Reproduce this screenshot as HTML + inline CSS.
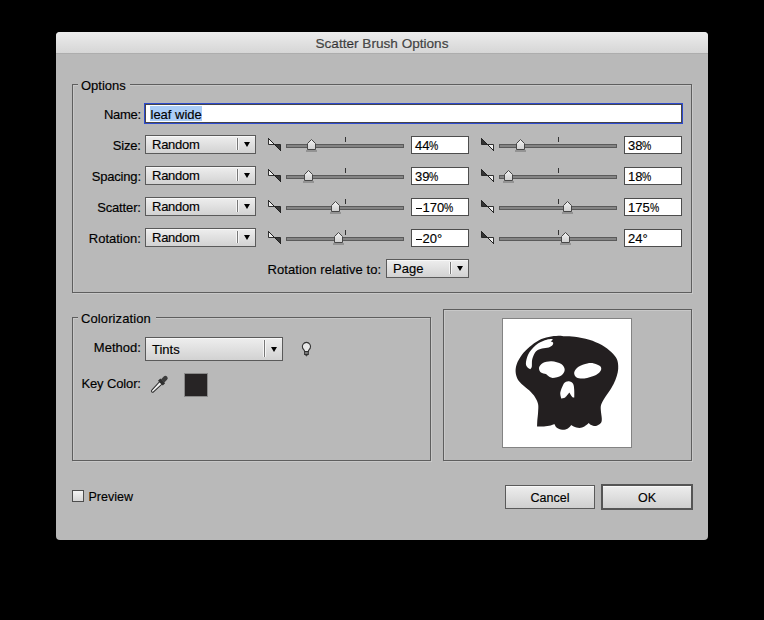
<!DOCTYPE html><html><head><meta charset="utf-8"><style>
*{margin:0;padding:0;box-sizing:border-box}
html,body{width:764px;height:620px;background:#000;overflow:hidden;font-family:"Liberation Sans", sans-serif;}
.a{position:absolute}
.t{position:absolute;font-size:13px;color:#000;-webkit-text-stroke:0.15px #000;white-space:nowrap;line-height:16px}
#win{position:absolute;left:56px;top:32px;width:652px;height:508px;background:#b9b9b9;border-radius:4px 4px 4px 4px;overflow:hidden}
#title{position:absolute;left:0;top:0;width:652px;height:22px;background:linear-gradient(#ececec,#d6d6d6);border-bottom:1px solid #adadad}
.grp{position:absolute;border:1px solid #5e5e5e;box-shadow:inset 1px 1px #c8c8c8,1px 1px #c8c8c8}
.lg{position:absolute;background:#b9b9b9;height:16px}
.pop{position:absolute;border:1px solid #5a5a5a;background:linear-gradient(#eeeeee,#d2d2d2);box-shadow:inset 0 1px #f8f8f8}
.pop .sep{position:absolute;top:2px;bottom:3px;width:1px;background:#777;box-shadow:1px 0 #f6f6f6,-1px 0 #f6f6f6}
.pop .arr{position:absolute;width:0;height:0;border-left:3.5px solid transparent;border-right:3.5px solid transparent;border-top:5px solid #000}
.fld{position:absolute;border:1px solid #4d4d4d;background:#fff}
.trk{position:absolute;height:4px;background:#848484;border:1px solid #5a5a5a}
.tick{position:absolute;width:1px;height:5px;background:#333}
.btn{position:absolute;border:1px solid #5a5a5a;background:linear-gradient(#eeeeee,#cfcfcf);box-shadow:inset 0 1px #f8f8f8}
</style></head><body><svg width="0" height="0" style="position:absolute"><defs><linearGradient id="thg" x1="0" y1="0" x2="0" y2="1"><stop offset="0" stop-color="#f2f2f2"/><stop offset="1" stop-color="#d0d0d0"/></linearGradient></defs></svg><div id="win"><div id="title"><div class="t" style="left:0;width:652px;text-align:center;top:4px;color:#4d4d4d;font-size:13.6px">Scatter Brush Options</div></div><div class="grp" style="left:16px;top:52px;width:620px;height:209px;"></div><div class="lg" style="left:22px;top:44px;width:52px"></div><div class="t" style="left:25px;top:46px;">Options</div><div class="t" style="right:567.2px;top:75px;letter-spacing:-0.3px">Name:</div><div class="fld" style="left:88px;top:71px;width:539px;height:21px;border:1px solid #2d4bcf;box-shadow:inset 0 0 0 1px #45454a;"></div><div class="a" style="left:94px;top:74px;width:52px;height:15px;background:#abcdf7"></div><div class="t" style="left:94.5px;top:75px;">leaf wide</div><div class="t" style="right:567.2px;top:105.5px;letter-spacing:-0.16px">Size:</div><div class="pop" style="left:89px;top:103px;width:111px;height:19px;"><div class="sep" style="left:91px"></div><div class="arr" style="left:97.5px;top:6px"></div><div class="t" style="left:6px;top:1px;letter-spacing:-0.25px">Random</div></div><svg class="a" style="left:212px;top:106px" width="14" height="14" viewBox="0 0 14 14"><path d="M0.5 0.5 L0.5 6.5 L6.5 6.5 Z" fill="#f0f0f0" stroke="#1e1e1e" stroke-width="0.9"/><path d="M6.5 6.5 L12.5 6.5 L12.5 12.5 Z" fill="#3a3a3a" stroke="#1e1e1e" stroke-width="0.9"/><path d="M0.3 0.3 L13 13" stroke="#1e1e1e" stroke-width="1"/></svg><div class="trk" style="left:230px;top:112px;width:118px;height:4px;"></div><div class="tick" style="left:289px;top:105px"></div><svg class="a" style="left:249.0px;top:106px" width="13" height="14" viewBox="0 0 13 14"><rect x="1" y="12" width="11" height="2" fill="#939393"/><path d="M2.5 11.5 L2.5 5.5 L6.5 1.5 L10.5 5.5 L10.5 11.5 Z" fill="url(#thg)" stroke="#474747" stroke-width="1"/></svg><div class="fld" style="left:355px;top:104px;width:58px;height:18px;"><div class="t" style="left:3px;top:1px">44<span style="display:inline-block;transform:scaleX(0.8);transform-origin:0 0">%</span></div></div><svg class="a" style="left:425px;top:106px" width="14" height="14" viewBox="0 0 14 14"><path d="M0.5 0.5 L0.5 6.5 L6.5 6.5 Z" fill="#333" stroke="#1e1e1e" stroke-width="0.9"/><path d="M6.5 6.5 L12.5 6.5 L12.5 12.5 Z" fill="#f0f0f0" stroke="#1e1e1e" stroke-width="0.9"/><path d="M0.3 0.3 L13 13" stroke="#1e1e1e" stroke-width="1"/></svg><div class="trk" style="left:443px;top:112px;width:118px;height:4px;"></div><div class="tick" style="left:502px;top:105px"></div><svg class="a" style="left:458.0px;top:106px" width="13" height="14" viewBox="0 0 13 14"><rect x="1" y="12" width="11" height="2" fill="#939393"/><path d="M2.5 11.5 L2.5 5.5 L6.5 1.5 L10.5 5.5 L10.5 11.5 Z" fill="url(#thg)" stroke="#474747" stroke-width="1"/></svg><div class="fld" style="left:568px;top:104px;width:58px;height:18px;"><div class="t" style="left:3px;top:1px">38<span style="display:inline-block;transform:scaleX(0.8);transform-origin:0 0">%</span></div></div><div class="t" style="right:567.2px;top:136.5px;letter-spacing:-0.19px">Spacing:</div><div class="pop" style="left:89px;top:134px;width:111px;height:19px;"><div class="sep" style="left:91px"></div><div class="arr" style="left:97.5px;top:6px"></div><div class="t" style="left:6px;top:1px;letter-spacing:-0.25px">Random</div></div><svg class="a" style="left:212px;top:137px" width="14" height="14" viewBox="0 0 14 14"><path d="M0.5 0.5 L0.5 6.5 L6.5 6.5 Z" fill="#f0f0f0" stroke="#1e1e1e" stroke-width="0.9"/><path d="M6.5 6.5 L12.5 6.5 L12.5 12.5 Z" fill="#3a3a3a" stroke="#1e1e1e" stroke-width="0.9"/><path d="M0.3 0.3 L13 13" stroke="#1e1e1e" stroke-width="1"/></svg><div class="trk" style="left:230px;top:143px;width:118px;height:4px;"></div><div class="tick" style="left:289px;top:136px"></div><svg class="a" style="left:246.0px;top:137px" width="13" height="14" viewBox="0 0 13 14"><rect x="1" y="12" width="11" height="2" fill="#939393"/><path d="M2.5 11.5 L2.5 5.5 L6.5 1.5 L10.5 5.5 L10.5 11.5 Z" fill="url(#thg)" stroke="#474747" stroke-width="1"/></svg><div class="fld" style="left:355px;top:135px;width:58px;height:18px;"><div class="t" style="left:3px;top:1px">39<span style="display:inline-block;transform:scaleX(0.8);transform-origin:0 0">%</span></div></div><svg class="a" style="left:425px;top:137px" width="14" height="14" viewBox="0 0 14 14"><path d="M0.5 0.5 L0.5 6.5 L6.5 6.5 Z" fill="#333" stroke="#1e1e1e" stroke-width="0.9"/><path d="M6.5 6.5 L12.5 6.5 L12.5 12.5 Z" fill="#f0f0f0" stroke="#1e1e1e" stroke-width="0.9"/><path d="M0.3 0.3 L13 13" stroke="#1e1e1e" stroke-width="1"/></svg><div class="trk" style="left:443px;top:143px;width:118px;height:4px;"></div><div class="tick" style="left:502px;top:136px"></div><svg class="a" style="left:446.0px;top:137px" width="13" height="14" viewBox="0 0 13 14"><rect x="1" y="12" width="11" height="2" fill="#939393"/><path d="M2.5 11.5 L2.5 5.5 L6.5 1.5 L10.5 5.5 L10.5 11.5 Z" fill="url(#thg)" stroke="#474747" stroke-width="1"/></svg><div class="fld" style="left:568px;top:135px;width:58px;height:18px;"><div class="t" style="left:3px;top:1px">18<span style="display:inline-block;transform:scaleX(0.8);transform-origin:0 0">%</span></div></div><div class="t" style="right:567.2px;top:167.5px;letter-spacing:-0.14px">Scatter:</div><div class="pop" style="left:89px;top:165px;width:111px;height:19px;"><div class="sep" style="left:91px"></div><div class="arr" style="left:97.5px;top:6px"></div><div class="t" style="left:6px;top:1px;letter-spacing:-0.25px">Random</div></div><svg class="a" style="left:212px;top:168px" width="14" height="14" viewBox="0 0 14 14"><path d="M0.5 0.5 L0.5 6.5 L6.5 6.5 Z" fill="#f0f0f0" stroke="#1e1e1e" stroke-width="0.9"/><path d="M6.5 6.5 L12.5 6.5 L12.5 12.5 Z" fill="#3a3a3a" stroke="#1e1e1e" stroke-width="0.9"/><path d="M0.3 0.3 L13 13" stroke="#1e1e1e" stroke-width="1"/></svg><div class="trk" style="left:230px;top:174px;width:118px;height:4px;"></div><div class="tick" style="left:289px;top:167px"></div><svg class="a" style="left:273.0px;top:168px" width="13" height="14" viewBox="0 0 13 14"><rect x="1" y="12" width="11" height="2" fill="#939393"/><path d="M2.5 11.5 L2.5 5.5 L6.5 1.5 L10.5 5.5 L10.5 11.5 Z" fill="url(#thg)" stroke="#474747" stroke-width="1"/></svg><div class="fld" style="left:355px;top:166px;width:58px;height:18px;"><div class="t" style="left:3px;top:1px"><span style="display:inline-block;width:5.4px;height:1.2px;background:#000;vertical-align:baseline;position:relative;top:-3.2px;margin:0 1px 0 1.2px"></span>170<span style="display:inline-block;transform:scaleX(0.8);transform-origin:0 0">%</span></div></div><svg class="a" style="left:425px;top:168px" width="14" height="14" viewBox="0 0 14 14"><path d="M0.5 0.5 L0.5 6.5 L6.5 6.5 Z" fill="#333" stroke="#1e1e1e" stroke-width="0.9"/><path d="M6.5 6.5 L12.5 6.5 L12.5 12.5 Z" fill="#f0f0f0" stroke="#1e1e1e" stroke-width="0.9"/><path d="M0.3 0.3 L13 13" stroke="#1e1e1e" stroke-width="1"/></svg><div class="trk" style="left:443px;top:174px;width:118px;height:4px;"></div><div class="tick" style="left:502px;top:167px"></div><svg class="a" style="left:504.5px;top:168px" width="13" height="14" viewBox="0 0 13 14"><rect x="1" y="12" width="11" height="2" fill="#939393"/><path d="M2.5 11.5 L2.5 5.5 L6.5 1.5 L10.5 5.5 L10.5 11.5 Z" fill="url(#thg)" stroke="#474747" stroke-width="1"/></svg><div class="fld" style="left:568px;top:166px;width:58px;height:18px;"><div class="t" style="left:3px;top:1px">175<span style="display:inline-block;transform:scaleX(0.8);transform-origin:0 0">%</span></div></div><div class="t" style="right:567.2px;top:198.5px;">Rotation:</div><div class="pop" style="left:89px;top:196px;width:111px;height:19px;"><div class="sep" style="left:91px"></div><div class="arr" style="left:97.5px;top:6px"></div><div class="t" style="left:6px;top:1px;letter-spacing:-0.25px">Random</div></div><svg class="a" style="left:212px;top:199px" width="14" height="14" viewBox="0 0 14 14"><path d="M0.5 0.5 L0.5 6.5 L6.5 6.5 Z" fill="#f0f0f0" stroke="#1e1e1e" stroke-width="0.9"/><path d="M6.5 6.5 L12.5 6.5 L12.5 12.5 Z" fill="#3a3a3a" stroke="#1e1e1e" stroke-width="0.9"/><path d="M0.3 0.3 L13 13" stroke="#1e1e1e" stroke-width="1"/></svg><div class="trk" style="left:230px;top:205px;width:118px;height:4px;"></div><div class="tick" style="left:289px;top:198px"></div><svg class="a" style="left:276.0px;top:199px" width="13" height="14" viewBox="0 0 13 14"><rect x="1" y="12" width="11" height="2" fill="#939393"/><path d="M2.5 11.5 L2.5 5.5 L6.5 1.5 L10.5 5.5 L10.5 11.5 Z" fill="url(#thg)" stroke="#474747" stroke-width="1"/></svg><div class="fld" style="left:355px;top:197px;width:58px;height:18px;"><div class="t" style="left:3px;top:1px"><span style="display:inline-block;width:5.4px;height:1.2px;background:#000;vertical-align:baseline;position:relative;top:-3.2px;margin:0 1px 0 1.2px"></span>20&#176;</div></div><svg class="a" style="left:425px;top:199px" width="14" height="14" viewBox="0 0 14 14"><path d="M0.5 0.5 L0.5 6.5 L6.5 6.5 Z" fill="#333" stroke="#1e1e1e" stroke-width="0.9"/><path d="M6.5 6.5 L12.5 6.5 L12.5 12.5 Z" fill="#f0f0f0" stroke="#1e1e1e" stroke-width="0.9"/><path d="M0.3 0.3 L13 13" stroke="#1e1e1e" stroke-width="1"/></svg><div class="trk" style="left:443px;top:205px;width:118px;height:4px;"></div><div class="tick" style="left:502px;top:198px"></div><svg class="a" style="left:502.5px;top:199px" width="13" height="14" viewBox="0 0 13 14"><rect x="1" y="12" width="11" height="2" fill="#939393"/><path d="M2.5 11.5 L2.5 5.5 L6.5 1.5 L10.5 5.5 L10.5 11.5 Z" fill="url(#thg)" stroke="#474747" stroke-width="1"/></svg><div class="fld" style="left:568px;top:197px;width:58px;height:18px;"><div class="t" style="left:3px;top:1px">24&#176;</div></div><div class="t" style="left:211.5px;top:230px;letter-spacing:0.08px">Rotation relative to:</div><div class="pop" style="left:330px;top:227px;width:83px;height:19px;"><div class="sep" style="left:63px"></div><div class="arr" style="left:69.5px;top:6px"></div><div class="t" style="left:6px;top:1px;">Page</div></div><div class="grp" style="left:16px;top:285px;width:359px;height:144px;"></div><div class="lg" style="left:22px;top:277px;width:78px"></div><div class="t" style="left:25px;top:278.5px;letter-spacing:0.1px">Colorization</div><div class="t" style="right:567.2px;top:307.5px;">Method:</div><div class="pop" style="left:89px;top:305px;width:138px;height:24px;"><div class="sep" style="left:118px"></div><div class="arr" style="left:124.5px;top:9px"></div><div class="t" style="left:6px;top:4px;">Tints</div></div><svg class="a" style="left:244px;top:308px" width="14" height="18" viewBox="0 0 14 18"><path d="M4.6 11.5 C4.6 10 3 9.2 2.63 8 A4.1 4.1 0 1 1 10.27 8 C9.9 9.2 8.3 10 8.3 11.5 Z" fill="#e8e8e8" stroke="#333" stroke-width="1.1"/><rect x="4.6" y="11.5" width="3.7" height="3" fill="#7a7a7a" stroke="#333" stroke-width="1"/><path d="M5.4 15 L6.45 16 L7.5 15 Z" fill="#333" stroke="#333" stroke-width="0.6"/></svg><div class="t" style="right:567.2px;top:343.5px;letter-spacing:-0.13px">Key Color:</div><svg class="a" style="left:-56px;top:-32px" width="764" height="620" viewBox="0 0 764 620"><g transform="translate(152.3 391.3) rotate(-45)"><path d="M0.5 -1.2 L12 -1.7 L12 1.7 L0.5 1.2 A1.2 1.2 0 0 1 0.5 -1.2 Z" fill="#f2f2f2" stroke="#2a2a2a" stroke-width="1"/><rect x="11.5" y="-3.4" width="3.2" height="6.8" fill="#2e2e2e"/><path d="M14.5 -2.3 L18.5 -2.3 A2.3 2.3 0 0 1 18.5 2.3 L14.5 2.3 Z" fill="#3c3c3c"/></g></svg><div class="a" style="left:128px;top:341px;width:24px;height:24px;background:#272425;border:1px solid #8a8a8a"></div><div class="grp" style="left:387px;top:277px;width:249px;height:152px;"></div><div class="a" style="left:446px;top:286px;width:130px;height:130px;background:#fff;border:1px solid #838383"></div><svg class="a" style="left:-56px;top:-32px" width="764" height="620" viewBox="0 0 764 620"><path d="M558.40 335.80 C561.12 335.68 562.28 336.13 565.00 336.30 C567.72 336.47 570.67 336.23 574.70 336.80 C578.73 337.37 584.68 338.33 589.20 339.70 C593.72 341.07 598.08 342.90 601.80 345.00 C605.52 347.10 609.00 349.97 611.50 352.30 C614.00 354.63 615.68 356.75 616.80 359.00 C617.92 361.25 618.05 363.53 618.20 365.80 C618.35 368.07 618.18 370.18 617.70 372.60 C617.22 375.02 616.33 377.78 615.30 380.30 C614.27 382.82 613.12 385.00 611.50 387.70 C609.88 390.40 607.30 393.75 605.60 396.50 C603.90 399.25 602.10 401.95 601.30 404.20 C600.50 406.45 600.72 407.58 600.80 410.00 C600.88 412.42 601.80 416.53 601.80 418.70 C601.80 420.87 601.77 421.78 600.80 423.00 C599.83 424.22 597.62 425.67 596.00 426.00 C594.38 426.33 592.32 425.50 591.10 425.00 C589.88 424.50 588.70 423.00 588.70 423.00 C588.70 423.00 585.93 425.68 584.40 426.50 C582.87 427.32 581.28 427.90 579.50 427.90 C577.72 427.90 575.07 426.98 573.70 426.50 C572.33 426.02 571.30 425.00 571.30 425.00 C571.30 425.00 569.40 427.60 567.90 428.40 C566.40 429.20 564.20 429.97 562.30 429.80 C560.40 429.63 557.80 428.37 556.50 427.40 C555.20 426.43 554.50 424.00 554.50 424.00 C554.50 424.00 552.37 425.08 550.60 425.50 C548.83 425.92 546.15 426.33 543.90 426.50 C541.65 426.67 537.10 426.50 537.10 426.50 C537.10 426.50 537.13 423.03 537.30 420.60 C537.47 418.17 537.97 414.63 538.10 411.90 C538.23 409.17 538.58 406.62 538.10 404.20 C537.62 401.78 536.65 399.67 535.20 397.40 C533.75 395.13 531.67 392.85 529.40 390.60 C527.13 388.35 523.62 385.93 521.60 383.90 C519.58 381.87 518.30 380.45 517.30 378.40 C516.30 376.35 515.68 374.02 515.60 371.60 C515.52 369.18 515.80 366.63 516.80 363.90 C517.80 361.17 519.50 358.02 521.60 355.20 C523.70 352.38 526.50 349.50 529.40 347.00 C532.30 344.50 535.78 341.87 539.00 340.20 C542.22 338.53 545.47 337.73 548.70 337.00 C551.93 336.27 555.68 335.92 558.40 335.80Z" fill="#231f20"/><path d="M539.00 367.70 C539.32 366.08 540.80 363.98 542.90 362.90 C545.00 361.82 548.53 361.03 551.60 361.20 C554.67 361.37 559.12 362.48 561.30 363.90 C563.48 365.32 564.70 367.77 564.70 369.70 C564.70 371.63 563.32 374.13 561.30 375.50 C559.28 376.87 554.87 377.90 552.60 377.90 C550.33 377.90 548.83 376.15 547.70 375.50 C546.57 374.85 546.92 374.48 545.80 374.00 C544.68 373.52 542.13 373.65 541.00 372.60 C539.87 371.55 538.68 369.32 539.00 367.70Z" fill="#fff"/><path d="M574.20 372.60 C574.52 370.83 576.32 368.33 578.50 366.80 C580.68 365.27 584.72 363.97 587.30 363.40 C589.88 362.83 591.83 362.92 594.00 363.40 C596.17 363.88 599.17 365.10 600.30 366.30 C601.43 367.50 601.52 369.15 600.80 370.60 C600.08 372.05 598.73 373.70 596.00 375.00 C593.27 376.30 587.63 378.00 584.40 378.40 C581.17 378.80 578.30 378.37 576.60 377.40 C574.90 376.43 573.88 374.37 574.20 372.60Z" fill="#fff"/><path d="M569.80 381.50 C571.00 381.85 572.47 382.53 573.20 383.90 C573.93 385.27 574.02 387.45 574.20 389.70 C574.38 391.95 574.30 397.40 574.30 397.40 C574.30 397.40 573.12 397.80 572.30 397.00 C571.48 396.20 569.40 392.60 569.40 392.60 C569.40 392.60 566.55 396.43 565.20 397.40 C563.85 398.37 561.30 398.40 561.30 398.40 C561.30 398.40 559.98 394.87 560.30 392.60 C560.62 390.33 562.25 386.60 563.20 384.80 C564.15 383.00 564.90 382.35 566.00 381.80 C567.10 381.25 568.60 381.15 569.80 381.50Z" fill="#fff"/><path d="M552.60 339.20 C551.97 338.88 549.23 338.98 546.80 339.70 C544.37 340.42 540.90 341.40 538.00 343.50 C535.10 345.60 531.40 349.23 529.40 352.30 C527.40 355.37 526.40 359.48 526.00 361.90 C525.60 364.32 526.28 365.58 527.00 366.80 C527.72 368.02 530.30 369.20 530.30 369.20 C530.30 369.20 531.47 368.50 531.80 366.80 C532.13 365.10 531.58 361.58 532.30 359.00 C533.02 356.42 534.48 353.07 536.10 351.30 C537.72 349.53 539.90 349.05 542.00 348.40 C544.10 347.75 546.93 347.97 548.70 347.40 C550.47 346.83 551.88 345.80 552.60 345.00 C553.32 344.20 553.33 343.17 553.00 342.60 C552.67 342.03 550.60 341.60 550.60 341.60 C550.60 341.60 553.23 339.52 552.60 339.20Z" fill="#fff"/></svg><div class="a" style="left:16px;top:458px;width:12px;height:12px;border:1px solid #4d4d4d;background:linear-gradient(#f4f4f4,#d6d6d6)"></div><div class="t" style="left:32.5px;top:456.5px;font-size:12.5px">Preview</div><div class="btn" style="left:449px;top:453px;width:90px;height:24px;"><div class="t" style="left:0;width:88px;text-align:center;top:4px;font-size:12.5px">Cancel</div></div><div class="btn" style="left:545px;top:452px;width:92px;height:26px;border:2px solid #555"><div class="t" style="left:0;width:88px;text-align:center;top:4px;font-size:12.5px">OK</div></div></div></body></html>
